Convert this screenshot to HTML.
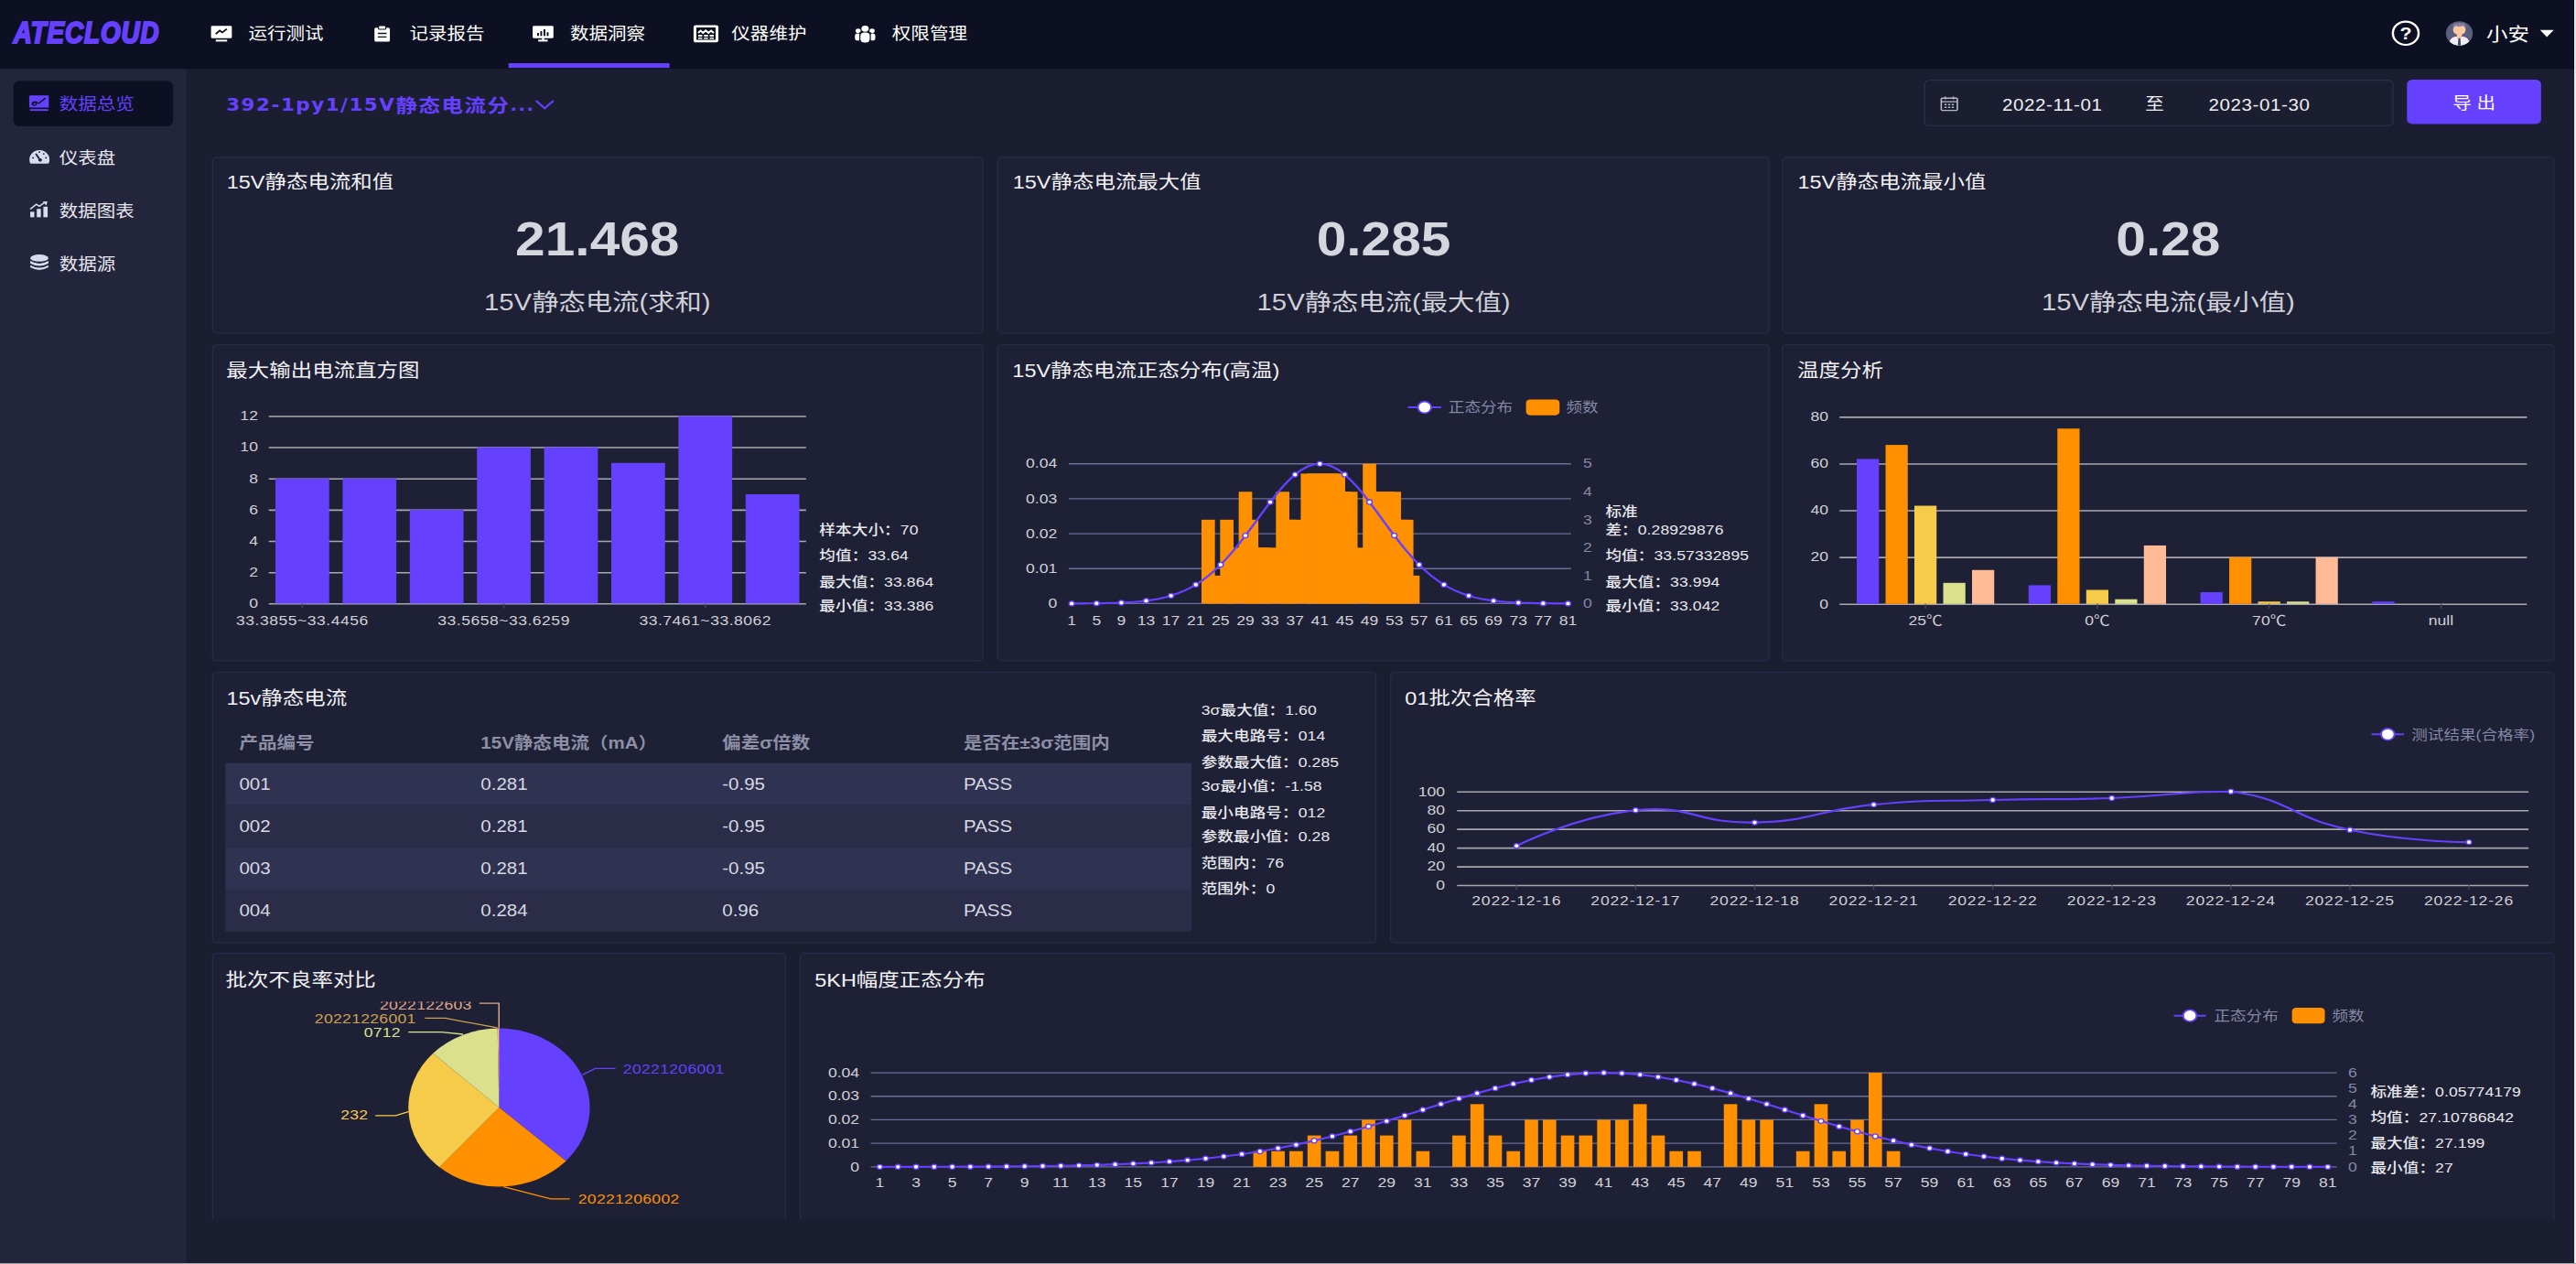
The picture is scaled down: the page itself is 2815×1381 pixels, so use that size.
<!DOCTYPE html>
<html lang="zh-CN"><head><meta charset="utf-8"><title>ATECLOUD</title>
<style>
html,body{margin:0;padding:0;}
body{width:2815px;height:1381px;overflow:hidden;background:#1b1e31;font-family:"Liberation Sans","Noto Sans CJK SC",sans-serif;}
#app{position:absolute;left:0;top:0;width:1920px;height:1080px;transform-origin:0 0;transform:scale(1.466146,1.278704);background:#1b1e31;color:#fff;font-size:14px;overflow:hidden;}
.abs{position:absolute;}
#hdr{left:0;top:0;width:1920px;height:58.9px;background:#0d1022;}
#side{left:0;top:58.9px;width:138.9px;height:1022px;background:#23253d;}
.panel{position:absolute;background:#1e2035;border:1px solid #272a48;border-radius:3.5px;box-sizing:border-box;}
.ptitle{position:absolute;font-size:16px;line-height:20px;color:#f2f2f5;white-space:nowrap;}
.nav{position:absolute;top:0px;height:58px;line-height:58px;font-size:14px;color:#fff;white-space:nowrap;}
.sitem{position:absolute;left:44.2px;font-size:14px;line-height:20px;color:#e4e4ea;white-space:nowrap;}
.stat{position:absolute;font-size:12px;line-height:16px;color:#e8e8ee;white-space:nowrap;letter-spacing:0.06px;}
.stat b{font-weight:500;}
.big{position:absolute;text-align:center;font-weight:700;font-size:40px;line-height:46px;color:#d6d6de;}
.sub{position:absolute;text-align:center;font-size:20px;line-height:26px;color:#d0d0d8;white-space:nowrap;}
svg{position:absolute;left:0;top:0;overflow:visible;}
svg text{font-family:"Liberation Sans","Noto Sans CJK SC",sans-serif;}
.th{position:absolute;font-size:14px;font-weight:700;color:#8d8fa6;line-height:20px;white-space:nowrap;}
.td{position:absolute;font-size:14px;color:#d8d8e2;line-height:20px;white-space:nowrap;}
</style></head><body>
<div id="app">

<div id="hdr" class="abs">
<div class="abs" id="logo" style="left:10px;top:9.5px;height:36px;line-height:36px;font-size:26px;font-weight:700;font-style:italic;color:#6640ff;transform-origin:0 50%;transform:scaleX(0.728);-webkit-text-stroke:1.7px #6640ff;letter-spacing:0.9px;">ATECLOUD</div>
<svg width="1920" height="58.4">
<g transform="translate(157.3,21.1)"><rect x="0" y="1" width="15.5" height="10.5" rx="1" fill="#fff"/><rect x="3.5" y="12.8" width="8.5" height="1.6" fill="#fff"/><path d="M3.5 8 L6.5 5 L8.3 6.6 L11.8 3.6" stroke="#0d1022" stroke-width="1.3" fill="none"/></g>
<g transform="translate(278.1,21.1)"><rect x="1" y="2.5" width="11.5" height="12" rx="1.2" fill="#fff"/><rect x="4" y="0.8" width="5.5" height="3.2" rx="0.8" fill="#fff" stroke="#0d1022" stroke-width="0.8"/><path d="M3.5 7.5H10M3.5 10.5H10" stroke="#0d1022" stroke-width="1.1"/></g>
<g transform="translate(397,21.1)"><rect x="0" y="1" width="15.5" height="10.5" rx="1" fill="#fff"/><rect x="4.2" y="12.8" width="7" height="1.6" fill="#fff"/><rect x="7" y="11" width="1.6" height="2.5" fill="#fff"/><path d="M4 9.5V7M6.4 9.5V5.5M8.8 9.5V4M11.2 9.5V6.5" stroke="#0d1022" stroke-width="1.3"/></g>
<g transform="translate(517,21.1)"><rect x="1" y="1.4" width="16.4" height="12.6" rx="0.5" fill="none" stroke="#fff" stroke-width="2.1"/><path d="M3.4 7 L5.2 5.2 L7 7 L9 5 L11 7 L13 5.2 L15 7" stroke="#fff" stroke-width="1.5" fill="none"/><path d="M3.4 9.4H6.4M7.7 9.4H10.7M12 9.4H15" stroke="#fff" stroke-width="1.5"/><path d="M3.4 11.6H6.4M7.7 11.6H10.7M12 11.6H15" stroke="#fff" stroke-width="1.2"/></g>
<g transform="translate(637.2,21.1)" fill="#fff"><circle cx="7.6" cy="3.4" r="2.7"/><rect x="3.9" y="6.6" width="7.4" height="8.6" rx="3.2"/><circle cx="2.4" cy="5.2" r="1.9"/><rect x="0" y="7.4" width="4.2" height="6.2" rx="2"/><circle cx="12.8" cy="5.2" r="1.9"/><rect x="11" y="7.4" width="4.2" height="6.2" rx="2"/><rect x="3.3" y="6.4" width="0.8" height="8" fill="#0d1022"/><rect x="11.1" y="6.4" width="0.8" height="8" fill="#0d1022"/></g>
<ellipse cx="1793.1" cy="28.4" rx="9.6" ry="9.9" fill="none" stroke="#fff" stroke-width="1.7"/>
<text x="1793.1" y="33.6" font-size="14.6" font-weight="700" fill="#fff" text-anchor="middle">?</text>
<g><ellipse cx="1833.05" cy="28.5" rx="10" ry="10.4" fill="#5b5f7e"/><clipPath id="av"><ellipse cx="1833.05" cy="28.5" rx="10" ry="10.4"/></clipPath><g clip-path="url(#av)"><path d="M1825.2 40 Q1825 32.2 1830 31.2 L1836.1 31.2 Q1841.1 32.2 1840.9 40Z" fill="#efeff3"/><rect x="1831.2" y="27.5" width="3.7" height="5" fill="#fcc8a0"/><path d="M1831.2 31.2 L1833.05 34 L1834.9 31.2Z" fill="#fcc8a0"/><ellipse cx="1833.05" cy="25.3" rx="4.7" ry="4.6" fill="#fdc9a1"/><path d="M1828.4 24.2 Q1828 20.2 1830.6 19.6 L1831.4 20.4 L1833 19.2 L1834.6 20.4 L1835.6 19.6 Q1838.2 20.4 1837.7 24.2 Q1836.6 21.8 1835 22.2 Q1833 23 1831 22.2 Q1829.4 21.8 1828.4 24.2Z" fill="#80839b"/><path d="M1832.3 32.6 L1833.8 32.6 L1834.1 38.6 L1833.05 39.4 L1832 38.6Z" fill="#3c4060"/></g></g>
<path d="M1893.2 25.6 L1903.4 25.6 L1898.3 31.6Z" fill="#fff"/>
</svg>
<div class="nav" style="left:185.2px;">运行测试</div>
<div class="nav" style="left:305.2px;">记录报告</div>
<div class="nav" style="left:424.9px;">数据洞察</div>
<div class="nav" style="left:545.2px;">仪器维护</div>
<div class="nav" style="left:664.9px;">权限管理</div>
<div class="abs" style="left:379.2px;top:54.4px;width:120px;height:4px;background:#6640ff;"></div>
<div class="abs" style="left:1853.2px;top:18px;font-size:16px;line-height:24px;color:#fff;">小安</div>
</div>
<div id="side" class="abs"></div>
<div class="abs" style="left:9.5px;top:68.7px;width:119.7px;height:39.7px;background:#0d1022;border-radius:5px;"></div>
<svg width="140" height="300">
<g transform="translate(21.8,81.0) scale(0.94)"><rect x="0" y="0.5" width="15.5" height="11" rx="0.8" fill="#6640ff"/><rect x="0.6" y="13" width="14.5" height="1.6" fill="#6640ff"/><path d="M2.2 8.8 L5 6.2 L7.5 7.8 L13 2.8" stroke="#0d1022" stroke-width="1.1" fill="none"/><circle cx="4" cy="8" r="1.6" fill="none" stroke="#0d1022" stroke-width="0.9"/></g>
<g transform="translate(21.8,126.4) scale(0.94)"><path d="M0.3 12.5 A8 8.6 0 1 1 15.9 12.5 Q15.9 14.3 14.5 14.3 H1.7 Q0.3 14.3 0.3 12.5Z" fill="#d9dbee"/><path d="M8.6 11 L5.2 5.2" stroke="#23253d" stroke-width="1.5"/><circle cx="8.6" cy="11" r="1.5" fill="#23253d"/><g fill="#23253d"><circle cx="3" cy="9" r="0.7"/><circle cx="8" cy="3.8" r="0.7"/><circle cx="11.5" cy="5.4" r="0.7"/><circle cx="13.3" cy="9" r="0.7"/></g></g>
<g transform="translate(21.8,171.9) scale(0.94)" fill="#d9dbee"><rect x="0.8" y="9.6" width="3.2" height="5"/><rect x="6" y="7" width="3.2" height="7.6"/><rect x="11.2" y="5" width="3.4" height="9.6"/><path d="M0.8 7.2 L5.6 2.8 L8 4.6 L12.2 1.2" stroke="#d9dbee" stroke-width="1.3" fill="none"/><path d="M10.6 0.4 L14.4 0.2 L13.6 3.8Z"/></g>
<g transform="translate(21.8,217.1) scale(0.94)" fill="#d9dbee"><ellipse cx="8" cy="3.6" rx="7.2" ry="3.2"/><path d="M0.8 6.2 Q8 11 15.2 6.2 V8.4 Q8 13.2 0.8 8.4Z"/><path d="M0.8 10 Q8 14.8 15.2 10 V12 Q8 16.8 0.8 12Z"/></g>
</svg>
<div class="sitem" style="top:79.39999999999999px;color:#6640ff;">数据总览</div>
<div class="sitem" style="top:124.8px;color:#e6e6ee;">仪表盘</div>
<div class="sitem" style="top:170.3px;color:#e6e6ee;">数据图表</div>
<div class="sitem" style="top:215.5px;color:#e6e6ee;">数据源</div>
<div class="abs" id="crumb" style="left:168.6px;top:79px;font-size:16px;line-height:22px;font-weight:700;color:#6640ff;white-space:nowrap;letter-spacing:1.05px;"><span style="font-family:'DejaVu Sans','Liberation Sans',sans-serif;font-size:14.6px;">392-1py1/15V</span><span style="position:relative;top:0.8px;">静态电流分</span><span style="font-family:'DejaVu Sans',sans-serif;font-size:13.4px;">...</span></div>
<svg width="1920" height="120"><path d="M399.5 86 L406 92.6 L412.5 86" fill="none" stroke="#6640ff" stroke-width="1.6"/>
<g transform="translate(1446.3,82.3)" fill="none" stroke="#b7b8c6" stroke-width="1.1"><rect x="0.6" y="1.6" width="12" height="10.4" rx="0.8"/><path d="M0.6 4.6H12.6M3.6 0.2V2.6M9.6 0.2V2.6" /><path d="M3 7H10.4M3 9.4H10.4" stroke-dasharray="1.6 1.1"/></g>
</svg>
<div class="abs" style="left:1434px;top:68.4px;width:350px;height:40px;border:1px solid #2b2e4b;border-radius:4px;box-sizing:border-box;"></div>
<div class="abs" style="left:1492.4px;top:79.5px;font-size:14px;line-height:20px;color:#f0f0f4;letter-spacing:0.4px;">2022-11-01</div>
<div class="abs" style="left:1599px;top:79px;font-size:14px;line-height:20px;color:#f0f0f4;">至</div>
<div class="abs" style="left:1646.2px;top:79.5px;font-size:14px;line-height:20px;color:#f0f0f4;letter-spacing:0.4px;">2023-01-30</div>
<div class="abs" style="left:1794px;top:68.3px;width:100px;height:38.2px;background:#6640ff;border-radius:4px;text-align:center;line-height:40.2px;font-size:14px;color:#fff;">导 出</div>
<div class="panel" style="left:157.5px;top:133.8px;width:575.5px;height:151.4px;"></div>
<div class="ptitle" style="left:169.0px;top:146.3px;">15V静态电流和值</div>
<div class="big" style="left:157.5px;width:575.5px;top:181.2px;">21.468</div>
<div class="sub" style="left:157.5px;width:575.5px;top:245px;">15V静态电流(求和)</div>
<div class="panel" style="left:743.4px;top:133.8px;width:575.8000000000001px;height:151.4px;"></div>
<div class="ptitle" style="left:754.9px;top:146.3px;">15V静态电流最大值</div>
<div class="big" style="left:743.4px;width:575.8000000000001px;top:181.2px;">0.285</div>
<div class="sub" style="left:743.4px;width:575.8000000000001px;top:245px;">15V静态电流(最大值)</div>
<div class="panel" style="left:1328.4px;top:133.8px;width:575.3999999999999px;height:151.4px;"></div>
<div class="ptitle" style="left:1339.9px;top:146.3px;">15V静态电流最小值</div>
<div class="big" style="left:1328.4px;width:575.3999999999999px;top:181.2px;">0.28</div>
<div class="sub" style="left:1328.4px;width:575.3999999999999px;top:245px;">15V静态电流(最小值)</div>
<div class="panel" style="left:157.5px;top:294.2px;width:575.5px;height:271px;"></div>
<div class="ptitle" style="left:168.7px;top:306.5px;">最大输出电流直方图</div>
<div class="panel" style="left:743.4px;top:294.2px;width:575.8000000000001px;height:271px;"></div>
<div class="ptitle" style="left:754.6px;top:306.5px;">15V静态电流正态分布(高温)</div>
<div class="panel" style="left:1328.4px;top:294.2px;width:575.3999999999999px;height:271px;"></div>
<div class="ptitle" style="left:1339.6000000000001px;top:306.5px;">温度分析</div>
<svg width="1920" height="1080">
<path d="M200.30 516.00H600.80" stroke="#a8a8ae" stroke-width="1.2"/>
<text x="192.30" y="519.40" font-size="12" fill="#d0d0d6" text-anchor="end" >0</text>
<path d="M200.30 489.30H600.80" stroke="#a8a8ae" stroke-width="1.2"/>
<text x="192.30" y="492.70" font-size="12" fill="#d0d0d6" text-anchor="end" >2</text>
<path d="M200.30 462.60H600.80" stroke="#a8a8ae" stroke-width="1.2"/>
<text x="192.30" y="466.00" font-size="12" fill="#d0d0d6" text-anchor="end" >4</text>
<path d="M200.30 435.90H600.80" stroke="#a8a8ae" stroke-width="1.2"/>
<text x="192.30" y="439.30" font-size="12" fill="#d0d0d6" text-anchor="end" >6</text>
<path d="M200.30 409.20H600.80" stroke="#a8a8ae" stroke-width="1.2"/>
<text x="192.30" y="412.60" font-size="12" fill="#d0d0d6" text-anchor="end" >8</text>
<path d="M200.30 382.50H600.80" stroke="#a8a8ae" stroke-width="1.2"/>
<text x="192.30" y="385.90" font-size="12" fill="#d0d0d6" text-anchor="end" >10</text>
<path d="M200.30 355.80H600.80" stroke="#a8a8ae" stroke-width="1.2"/>
<text x="192.30" y="359.20" font-size="12" fill="#d0d0d6" text-anchor="end" >12</text>
<rect x="205.31" y="408.90" width="40.05" height="106.80" fill="#6640ff"/>
<rect x="255.37" y="408.90" width="40.05" height="106.80" fill="#6640ff"/>
<rect x="305.43" y="435.60" width="40.05" height="80.10" fill="#6640ff"/>
<rect x="355.49" y="382.20" width="40.05" height="133.50" fill="#6640ff"/>
<rect x="405.56" y="382.20" width="40.05" height="133.50" fill="#6640ff"/>
<rect x="455.62" y="395.55" width="40.05" height="120.15" fill="#6640ff"/>
<rect x="505.68" y="355.50" width="40.05" height="160.20" fill="#6640ff"/>
<rect x="555.74" y="422.25" width="40.05" height="93.45" fill="#6640ff"/>
<path d="M225.33 515.7v4" stroke="#44465a" stroke-width="1"/>
<text x="225.33" y="533.90" font-size="12" fill="#d0d0d6" text-anchor="middle" letter-spacing="0.33">33.3855~33.4456</text>
<path d="M375.52 515.7v4" stroke="#44465a" stroke-width="1"/>
<text x="375.52" y="533.90" font-size="12" fill="#d0d0d6" text-anchor="middle" letter-spacing="0.33">33.5658~33.6259</text>
<path d="M525.71 515.7v4" stroke="#44465a" stroke-width="1"/>
<text x="525.71" y="533.90" font-size="12" fill="#d0d0d6" text-anchor="middle" letter-spacing="0.33">33.7461~33.8062</text>
<path d="M796.50 515.70H1171.00" stroke="#6b6f97" stroke-width="1"/>
<text x="788.00" y="519.40" font-size="12" fill="#d0d0d6" text-anchor="end" >0</text>
<path d="M796.50 485.85H1171.00" stroke="#6b6f97" stroke-width="1"/>
<text x="788.00" y="489.55" font-size="12" fill="#d0d0d6" text-anchor="end" >0.01</text>
<path d="M796.50 456.00H1171.00" stroke="#6b6f97" stroke-width="1"/>
<text x="788.00" y="459.70" font-size="12" fill="#d0d0d6" text-anchor="end" >0.02</text>
<path d="M796.50 426.15H1171.00" stroke="#6b6f97" stroke-width="1"/>
<text x="788.00" y="429.85" font-size="12" fill="#d0d0d6" text-anchor="end" >0.03</text>
<path d="M796.50 396.30H1171.00" stroke="#6b6f97" stroke-width="1"/>
<text x="788.00" y="400.00" font-size="12" fill="#d0d0d6" text-anchor="end" >0.04</text>
<text x="1180.00" y="519.40" font-size="12" fill="#8588a6" text-anchor="start" >0</text>
<text x="1180.00" y="495.52" font-size="12" fill="#8588a6" text-anchor="start" >1</text>
<text x="1180.00" y="471.64" font-size="12" fill="#8588a6" text-anchor="start" >2</text>
<text x="1180.00" y="447.76" font-size="12" fill="#8588a6" text-anchor="start" >3</text>
<text x="1180.00" y="423.88" font-size="12" fill="#8588a6" text-anchor="start" >4</text>
<text x="1180.00" y="400.00" font-size="12" fill="#8588a6" text-anchor="start" >5</text>
<rect x="895.53" y="444.06" width="10" height="71.64" fill="#ff9000"/>
<rect x="900.15" y="491.82" width="10" height="23.88" fill="#ff9000"/>
<rect x="909.40" y="444.06" width="10" height="71.64" fill="#ff9000"/>
<rect x="914.02" y="467.94" width="10" height="47.76" fill="#ff9000"/>
<rect x="923.27" y="420.18" width="10" height="95.52" fill="#ff9000"/>
<rect x="927.89" y="444.06" width="10" height="71.64" fill="#ff9000"/>
<rect x="932.52" y="467.94" width="10" height="47.76" fill="#ff9000"/>
<rect x="937.14" y="467.94" width="10" height="47.76" fill="#ff9000"/>
<rect x="941.76" y="467.94" width="10" height="47.76" fill="#ff9000"/>
<rect x="951.01" y="420.18" width="10" height="95.52" fill="#ff9000"/>
<rect x="955.63" y="444.06" width="10" height="71.64" fill="#ff9000"/>
<rect x="960.26" y="444.06" width="10" height="71.64" fill="#ff9000"/>
<rect x="969.50" y="404.66" width="10" height="111.04" fill="#ff9000"/>
<rect x="974.13" y="404.66" width="10" height="111.04" fill="#ff9000"/>
<rect x="978.75" y="404.66" width="10" height="111.04" fill="#ff9000"/>
<rect x="983.37" y="404.66" width="10" height="111.04" fill="#ff9000"/>
<rect x="988.00" y="404.66" width="10" height="111.04" fill="#ff9000"/>
<rect x="992.62" y="404.66" width="10" height="111.04" fill="#ff9000"/>
<rect x="997.24" y="420.18" width="10" height="95.52" fill="#ff9000"/>
<rect x="1001.87" y="420.18" width="10" height="95.52" fill="#ff9000"/>
<rect x="1006.49" y="467.94" width="10" height="47.76" fill="#ff9000"/>
<rect x="1015.74" y="396.30" width="10" height="119.40" fill="#ff9000"/>
<rect x="1020.36" y="420.18" width="10" height="95.52" fill="#ff9000"/>
<rect x="1024.98" y="420.18" width="10" height="95.52" fill="#ff9000"/>
<rect x="1029.61" y="420.18" width="10" height="95.52" fill="#ff9000"/>
<rect x="1034.23" y="420.18" width="10" height="95.52" fill="#ff9000"/>
<rect x="1038.85" y="444.06" width="10" height="71.64" fill="#ff9000"/>
<rect x="1043.48" y="444.06" width="10" height="71.64" fill="#ff9000"/>
<rect x="1048.10" y="491.82" width="10" height="23.88" fill="#ff9000"/>
<path d="M798.81 515.66 L803.44 515.64 L808.06 515.61 L812.68 515.57 L817.31 515.52 L821.93 515.44 L826.55 515.33 L831.18 515.18 L835.80 514.99 L840.42 514.72 L845.05 514.37 L849.67 513.92 L854.29 513.33 L858.92 512.58 L863.54 511.63 L868.16 510.45 L872.79 509.00 L877.41 507.22 L882.03 505.08 L886.66 502.54 L891.28 499.54 L895.90 496.06 L900.53 492.07 L905.15 487.55 L909.77 482.50 L914.40 476.94 L919.02 470.89 L923.65 464.41 L928.27 457.58 L932.89 450.50 L937.52 443.28 L942.14 436.06 L946.76 429.00 L951.39 422.25 L956.01 415.97 L960.63 410.33 L965.26 405.48 L969.88 401.55 L974.50 398.66 L979.13 396.90 L983.75 396.30 L988.37 396.90 L993.00 398.66 L997.62 401.55 L1002.24 405.48 L1006.87 410.33 L1011.49 415.97 L1016.11 422.25 L1020.74 429.00 L1025.36 436.06 L1029.98 443.28 L1034.61 450.50 L1039.23 457.58 L1043.85 464.41 L1048.48 470.89 L1053.10 476.94 L1057.73 482.50 L1062.35 487.55 L1066.97 492.07 L1071.60 496.06 L1076.22 499.54 L1080.84 502.54 L1085.47 505.08 L1090.09 507.22 L1094.71 509.00 L1099.34 510.45 L1103.96 511.63 L1108.58 512.58 L1113.21 513.33 L1117.83 513.92 L1122.45 514.37 L1127.08 514.72 L1131.70 514.99 L1136.32 515.18 L1140.95 515.33 L1145.57 515.44 L1150.19 515.52 L1154.82 515.57 L1159.44 515.61 L1164.06 515.64 L1168.69 515.66" fill="none" stroke="#6640ff" stroke-width="1.7"/>
<circle cx="798.81" cy="515.66" r="2" fill="#fff" stroke="#6640ff" stroke-width="1"/>
<text x="798.81" y="533.90" font-size="12" fill="#d0d0d6" text-anchor="middle" >1</text>
<circle cx="817.31" cy="515.52" r="2" fill="#fff" stroke="#6640ff" stroke-width="1"/>
<text x="817.31" y="533.90" font-size="12" fill="#d0d0d6" text-anchor="middle" >5</text>
<circle cx="835.80" cy="514.99" r="2" fill="#fff" stroke="#6640ff" stroke-width="1"/>
<text x="835.80" y="533.90" font-size="12" fill="#d0d0d6" text-anchor="middle" >9</text>
<circle cx="854.29" cy="513.33" r="2" fill="#fff" stroke="#6640ff" stroke-width="1"/>
<text x="854.29" y="533.90" font-size="12" fill="#d0d0d6" text-anchor="middle" >13</text>
<circle cx="872.79" cy="509.00" r="2" fill="#fff" stroke="#6640ff" stroke-width="1"/>
<text x="872.79" y="533.90" font-size="12" fill="#d0d0d6" text-anchor="middle" >17</text>
<circle cx="891.28" cy="499.54" r="2" fill="#fff" stroke="#6640ff" stroke-width="1"/>
<text x="891.28" y="533.90" font-size="12" fill="#d0d0d6" text-anchor="middle" >21</text>
<circle cx="909.77" cy="482.50" r="2" fill="#fff" stroke="#6640ff" stroke-width="1"/>
<text x="909.77" y="533.90" font-size="12" fill="#d0d0d6" text-anchor="middle" >25</text>
<circle cx="928.27" cy="457.58" r="2" fill="#fff" stroke="#6640ff" stroke-width="1"/>
<text x="928.27" y="533.90" font-size="12" fill="#d0d0d6" text-anchor="middle" >29</text>
<circle cx="946.76" cy="429.00" r="2" fill="#fff" stroke="#6640ff" stroke-width="1"/>
<text x="946.76" y="533.90" font-size="12" fill="#d0d0d6" text-anchor="middle" >33</text>
<circle cx="965.26" cy="405.48" r="2" fill="#fff" stroke="#6640ff" stroke-width="1"/>
<text x="965.26" y="533.90" font-size="12" fill="#d0d0d6" text-anchor="middle" >37</text>
<circle cx="983.75" cy="396.30" r="2" fill="#fff" stroke="#6640ff" stroke-width="1"/>
<text x="983.75" y="533.90" font-size="12" fill="#d0d0d6" text-anchor="middle" >41</text>
<circle cx="1002.24" cy="405.48" r="2" fill="#fff" stroke="#6640ff" stroke-width="1"/>
<text x="1002.24" y="533.90" font-size="12" fill="#d0d0d6" text-anchor="middle" >45</text>
<circle cx="1020.74" cy="429.00" r="2" fill="#fff" stroke="#6640ff" stroke-width="1"/>
<text x="1020.74" y="533.90" font-size="12" fill="#d0d0d6" text-anchor="middle" >49</text>
<circle cx="1039.23" cy="457.58" r="2" fill="#fff" stroke="#6640ff" stroke-width="1"/>
<text x="1039.23" y="533.90" font-size="12" fill="#d0d0d6" text-anchor="middle" >53</text>
<circle cx="1057.73" cy="482.50" r="2" fill="#fff" stroke="#6640ff" stroke-width="1"/>
<text x="1057.73" y="533.90" font-size="12" fill="#d0d0d6" text-anchor="middle" >57</text>
<circle cx="1076.22" cy="499.54" r="2" fill="#fff" stroke="#6640ff" stroke-width="1"/>
<text x="1076.22" y="533.90" font-size="12" fill="#d0d0d6" text-anchor="middle" >61</text>
<circle cx="1094.71" cy="509.00" r="2" fill="#fff" stroke="#6640ff" stroke-width="1"/>
<text x="1094.71" y="533.90" font-size="12" fill="#d0d0d6" text-anchor="middle" >65</text>
<circle cx="1113.21" cy="513.33" r="2" fill="#fff" stroke="#6640ff" stroke-width="1"/>
<text x="1113.21" y="533.90" font-size="12" fill="#d0d0d6" text-anchor="middle" >69</text>
<circle cx="1131.70" cy="514.99" r="2" fill="#fff" stroke="#6640ff" stroke-width="1"/>
<text x="1131.70" y="533.90" font-size="12" fill="#d0d0d6" text-anchor="middle" >73</text>
<circle cx="1150.19" cy="515.52" r="2" fill="#fff" stroke="#6640ff" stroke-width="1"/>
<text x="1150.19" y="533.90" font-size="12" fill="#d0d0d6" text-anchor="middle" >77</text>
<circle cx="1168.69" cy="515.66" r="2" fill="#fff" stroke="#6640ff" stroke-width="1"/>
<text x="1168.69" y="533.90" font-size="12" fill="#d0d0d6" text-anchor="middle" >81</text>
<path d="M1049.4 348H1074.2" stroke="#6640ff" stroke-width="1.6"/><circle cx="1061.8" cy="348" r="5" fill="#fff" stroke="#6640ff" stroke-width="1.3"/>
<text x="1079.60" y="352.30" font-size="12" fill="#8588a6" text-anchor="start" >正态分布</text>
<rect x="1137.4" y="341.3" width="25" height="13.5" rx="3" fill="#ff9000"/>
<text x="1167.30" y="352.30" font-size="12" fill="#8588a6" text-anchor="start" >频数</text>
<path d="M1371.10 516.30H1883.40" stroke="#a8a8ae" stroke-width="1.2"/>
<text x="1362.80" y="519.70" font-size="12" fill="#d0d0d6" text-anchor="end" >0</text>
<path d="M1371.10 476.35H1883.40" stroke="#a8a8ae" stroke-width="1.2"/>
<text x="1362.80" y="479.75" font-size="12" fill="#d0d0d6" text-anchor="end" >20</text>
<path d="M1371.10 436.40H1883.40" stroke="#a8a8ae" stroke-width="1.2"/>
<text x="1362.80" y="439.80" font-size="12" fill="#d0d0d6" text-anchor="end" >40</text>
<path d="M1371.10 396.45H1883.40" stroke="#a8a8ae" stroke-width="1.2"/>
<text x="1362.80" y="399.85" font-size="12" fill="#d0d0d6" text-anchor="end" >60</text>
<path d="M1371.10 356.50H1883.40" stroke="#a8a8ae" stroke-width="1.2"/>
<text x="1362.80" y="359.90" font-size="12" fill="#d0d0d6" text-anchor="end" >80</text>
<rect x="1383.91" y="392.15" width="16.53" height="123.84" fill="#6640ff"/>
<rect x="1405.39" y="380.17" width="16.53" height="135.83" fill="#ff9000"/>
<rect x="1426.87" y="432.11" width="16.53" height="83.90" fill="#f7cb4a"/>
<rect x="1448.36" y="498.02" width="16.53" height="17.98" fill="#dbe08d"/>
<rect x="1469.84" y="487.04" width="16.53" height="28.96" fill="#ffbb96"/>
<path d="M1435.14 516.0v4" stroke="#44465a" stroke-width="1"/>
<text x="1435.14" y="534.20" font-size="12" fill="#d0d0d6" text-anchor="middle" >25℃</text>
<rect x="1511.98" y="500.02" width="16.53" height="15.98" fill="#6640ff"/>
<rect x="1533.47" y="366.19" width="16.53" height="149.81" fill="#ff9000"/>
<rect x="1554.95" y="504.01" width="16.53" height="11.99" fill="#f7cb4a"/>
<rect x="1576.43" y="512.00" width="16.53" height="4.00" fill="#dbe08d"/>
<rect x="1597.92" y="466.06" width="16.53" height="49.94" fill="#ffbb96"/>
<path d="M1563.21 516.0v4" stroke="#44465a" stroke-width="1"/>
<text x="1563.21" y="534.20" font-size="12" fill="#d0d0d6" text-anchor="middle" >0℃</text>
<rect x="1640.06" y="506.01" width="16.53" height="9.99" fill="#6640ff"/>
<rect x="1661.54" y="476.05" width="16.53" height="39.95" fill="#ff9000"/>
<rect x="1683.02" y="514.00" width="16.53" height="2.00" fill="#f7cb4a"/>
<rect x="1704.51" y="514.00" width="16.53" height="2.00" fill="#dbe08d"/>
<rect x="1725.99" y="476.05" width="16.53" height="39.95" fill="#ffbb96"/>
<path d="M1691.29 516.0v4" stroke="#44465a" stroke-width="1"/>
<text x="1691.29" y="534.20" font-size="12" fill="#d0d0d6" text-anchor="middle" >70℃</text>
<rect x="1768.13" y="514.00" width="16.53" height="2.00" fill="#6640ff"/>
<path d="M1819.36 516.0v4" stroke="#44465a" stroke-width="1"/>
<text x="1819.36" y="534.20" font-size="12" fill="#d0d0d6" text-anchor="middle" >null</text>
</svg>
<div class="stat" style="left:610.7px;top:445.3px;"><b>样本大小：</b>70</div>
<div class="stat" style="left:610.7px;top:467.3px;"><b>均值：</b>33.64</div>
<div class="stat" style="left:610.7px;top:488.59999999999997px;"><b>最大值：</b>33.864</div>
<div class="stat" style="left:610.7px;top:510.3px;"><b>最小值：</b>33.386</div>
<div class="stat" style="left:1196.6px;top:429.0px;"><b>标准</b></div>
<div class="stat" style="left:1196.6px;top:445.3px;"><b>差：</b>0.28929876</div>
<div class="stat" style="left:1196.6px;top:467.3px;"><b>均值：</b>33.57332895</div>
<div class="stat" style="left:1196.6px;top:488.59999999999997px;"><b>最大值：</b>33.994</div>
<div class="stat" style="left:1196.6px;top:510.3px;"><b>最小值：</b>33.042</div>
<div class="panel" style="left:157.5px;top:574.3px;width:868.7px;height:231.4px;"></div>
<div class="ptitle" style="left:168.8px;top:586.7px;">15v静态电流</div>
<div class="panel" style="left:1036.2px;top:574.3px;width:867.5999999999999px;height:231.4px;"></div>
<div class="ptitle" style="left:1047.2px;top:586.7px;">01批次合格率</div>
<div class="th" style="left:178.3px;top:625.2px;">产品编号</div>
<div class="th" style="left:358.3px;top:625.2px;">15V静态电流（mA）</div>
<div class="th" style="left:538.3px;top:625.2px;">偏差σ倍数</div>
<div class="th" style="left:718.2px;top:625.2px;">是否在±3σ范围内</div>
<div class="abs" style="left:168.3px;top:651.80px;width:719.5px;height:36.1px;background:#303252;"></div>
<div class="td" style="left:178.3px;top:660.10px;">001</div>
<div class="td" style="left:358.3px;top:660.10px;">0.281</div>
<div class="td" style="left:538.3px;top:660.10px;">-0.95</div>
<div class="td" style="left:718.2px;top:660.10px;">PASS</div>
<div class="abs" style="left:168.3px;top:687.83px;width:719.5px;height:36.1px;background:#2a2c48;"></div>
<div class="td" style="left:178.3px;top:696.13px;">002</div>
<div class="td" style="left:358.3px;top:696.13px;">0.281</div>
<div class="td" style="left:538.3px;top:696.13px;">-0.95</div>
<div class="td" style="left:718.2px;top:696.13px;">PASS</div>
<div class="abs" style="left:168.3px;top:723.86px;width:719.5px;height:36.1px;background:#303252;"></div>
<div class="td" style="left:178.3px;top:732.16px;">003</div>
<div class="td" style="left:358.3px;top:732.16px;">0.281</div>
<div class="td" style="left:538.3px;top:732.16px;">-0.95</div>
<div class="td" style="left:718.2px;top:732.16px;">PASS</div>
<div class="abs" style="left:168.3px;top:759.89px;width:719.5px;height:36.1px;background:#2a2c48;"></div>
<div class="td" style="left:178.3px;top:768.19px;">004</div>
<div class="td" style="left:358.3px;top:768.19px;">0.284</div>
<div class="td" style="left:538.3px;top:768.19px;">0.96</div>
<div class="td" style="left:718.2px;top:768.19px;">PASS</div>
<div class="stat" style="left:895.3px;top:599.30px;"><b>3σ最大值：</b>1.60</div>
<div class="stat" style="left:895.3px;top:620.90px;"><b>最大电路号：</b>014</div>
<div class="stat" style="left:895.3px;top:642.50px;"><b>参数最大值：</b>0.285</div>
<div class="stat" style="left:895.3px;top:664.10px;"><b>3σ最小值：</b>-1.58</div>
<div class="stat" style="left:895.3px;top:685.70px;"><b>最小电路号：</b>012</div>
<div class="stat" style="left:895.3px;top:707.30px;"><b>参数最小值：</b>0.28</div>
<div class="stat" style="left:895.3px;top:728.90px;"><b>范围内：</b>76</div>
<div class="stat" style="left:895.3px;top:750.50px;"><b>范围外：</b>0</div>
<svg width="1920" height="1080">
<path d="M1086.00 756.70H1884.60" stroke="#a8a8ae" stroke-width="1.2"/>
<text x="1077.00" y="760.10" font-size="12" fill="#d0d0d6" text-anchor="end" >0</text>
<path d="M1086.00 740.68H1884.60" stroke="#a8a8ae" stroke-width="1.2"/>
<text x="1077.00" y="744.08" font-size="12" fill="#d0d0d6" text-anchor="end" >20</text>
<path d="M1086.00 724.66H1884.60" stroke="#a8a8ae" stroke-width="1.2"/>
<text x="1077.00" y="728.06" font-size="12" fill="#d0d0d6" text-anchor="end" >40</text>
<path d="M1086.00 708.64H1884.60" stroke="#a8a8ae" stroke-width="1.2"/>
<text x="1077.00" y="712.04" font-size="12" fill="#d0d0d6" text-anchor="end" >60</text>
<path d="M1086.00 692.62H1884.60" stroke="#a8a8ae" stroke-width="1.2"/>
<text x="1077.00" y="696.02" font-size="12" fill="#d0d0d6" text-anchor="end" >80</text>
<path d="M1086.00 676.60H1884.60" stroke="#a8a8ae" stroke-width="1.2"/>
<text x="1077.00" y="680.00" font-size="12" fill="#d0d0d6" text-anchor="end" >100</text>
<path d="M1130.37 722.76 C1130.37 722.76 1173.65 697.45 1219.10 692.32 C1262.38 687.44 1263.64 703.93 1307.83 702.73 C1352.37 701.53 1351.90 692.35 1396.57 687.51 C1440.63 682.74 1440.91 684.91 1485.30 683.51 C1529.65 682.11 1529.71 683.71 1574.03 681.91 C1618.44 680.10 1619.78 676.30 1662.77 676.30 C1708.51 683.32 1705.86 698.02 1751.50 709.14 C1794.59 719.64 1840.23 719.55 1840.23 719.55" fill="none" stroke="#6640ff" stroke-width="1.7"/>
<circle cx="1130.37" cy="722.76" r="2" fill="#fff" stroke="#6640ff" stroke-width="1"/>
<path d="M1130.37 756.4v4" stroke="#44465a" stroke-width="1"/>
<text x="1130.37" y="773.80" font-size="12" fill="#d0d0d6" text-anchor="middle" letter-spacing="0.55">2022-12-16</text>
<circle cx="1219.10" cy="692.32" r="2" fill="#fff" stroke="#6640ff" stroke-width="1"/>
<path d="M1219.10 756.4v4" stroke="#44465a" stroke-width="1"/>
<text x="1219.10" y="773.80" font-size="12" fill="#d0d0d6" text-anchor="middle" letter-spacing="0.55">2022-12-17</text>
<circle cx="1307.83" cy="702.73" r="2" fill="#fff" stroke="#6640ff" stroke-width="1"/>
<path d="M1307.83 756.4v4" stroke="#44465a" stroke-width="1"/>
<text x="1307.83" y="773.80" font-size="12" fill="#d0d0d6" text-anchor="middle" letter-spacing="0.55">2022-12-18</text>
<circle cx="1396.57" cy="687.51" r="2" fill="#fff" stroke="#6640ff" stroke-width="1"/>
<path d="M1396.57 756.4v4" stroke="#44465a" stroke-width="1"/>
<text x="1396.57" y="773.80" font-size="12" fill="#d0d0d6" text-anchor="middle" letter-spacing="0.55">2022-12-21</text>
<circle cx="1485.30" cy="683.51" r="2" fill="#fff" stroke="#6640ff" stroke-width="1"/>
<path d="M1485.30 756.4v4" stroke="#44465a" stroke-width="1"/>
<text x="1485.30" y="773.80" font-size="12" fill="#d0d0d6" text-anchor="middle" letter-spacing="0.55">2022-12-22</text>
<circle cx="1574.03" cy="681.91" r="2" fill="#fff" stroke="#6640ff" stroke-width="1"/>
<path d="M1574.03 756.4v4" stroke="#44465a" stroke-width="1"/>
<text x="1574.03" y="773.80" font-size="12" fill="#d0d0d6" text-anchor="middle" letter-spacing="0.55">2022-12-23</text>
<circle cx="1662.77" cy="676.30" r="2" fill="#fff" stroke="#6640ff" stroke-width="1"/>
<path d="M1662.77 756.4v4" stroke="#44465a" stroke-width="1"/>
<text x="1662.77" y="773.80" font-size="12" fill="#d0d0d6" text-anchor="middle" letter-spacing="0.55">2022-12-24</text>
<circle cx="1751.50" cy="709.14" r="2" fill="#fff" stroke="#6640ff" stroke-width="1"/>
<path d="M1751.50 756.4v4" stroke="#44465a" stroke-width="1"/>
<text x="1751.50" y="773.80" font-size="12" fill="#d0d0d6" text-anchor="middle" letter-spacing="0.55">2022-12-25</text>
<circle cx="1840.23" cy="719.55" r="2" fill="#fff" stroke="#6640ff" stroke-width="1"/>
<path d="M1840.23 756.4v4" stroke="#44465a" stroke-width="1"/>
<text x="1840.23" y="773.80" font-size="12" fill="#d0d0d6" text-anchor="middle" letter-spacing="0.55">2022-12-26</text>
<path d="M1767.6 627.4H1791.8" stroke="#6640ff" stroke-width="1.6"/><circle cx="1779.7" cy="627.4" r="5" fill="#fff" stroke="#6640ff" stroke-width="1.3"/>
<text x="1797.40" y="631.70" font-size="12" fill="#8588a6" text-anchor="start" >测试结果(合格率)</text>
</svg>
<div class="panel" style="left:157.5px;top:814.3px;width:428.79999999999995px;height:240px;"></div>
<div class="ptitle" style="left:168.2px;top:827.5px;">批次不良率对比</div>
<div class="panel" style="left:596px;top:814.3px;width:1307.8px;height:240px;"></div>
<div class="ptitle" style="left:607.2px;top:827.5px;">5KH幅度正态分布</div>
<svg width="1920" height="1080">
<path d="M372.0 946.3 L372.00 878.70 A67.6 67.6 0 0 1 421.84 991.97Z" fill="#6640ff"/>
<path d="M372.0 946.3 L421.84 991.97 A67.6 67.6 0 0 1 327.56 997.24Z" fill="#ff9000"/>
<path d="M372.0 946.3 L327.56 997.24 A67.6 67.6 0 0 1 322.80 899.94Z" fill="#f7cb4a"/>
<path d="M372.0 946.3 L322.80 899.94 A67.6 67.6 0 0 1 370.82 878.71Z" fill="#dbe08d"/>
<path d="M372.0 946.3 L370.82 878.71 L372.0 878.6999999999999Z" fill="#ffbb96"/>
<path d="M434.10 918.40 L443.60 913.00 L458.70 913.00" fill="none" stroke="#6640ff" stroke-width="1"/>
<text x="464.40" y="917.30" font-size="12" fill="#6640ff" text-anchor="start" letter-spacing="0.2">20221206001</text>
<path d="M375.40 1014.00 L410.50 1024.40 L424.70 1024.40" fill="none" stroke="#ff9000" stroke-width="1"/>
<text x="430.90" y="1028.20" font-size="12" fill="#ff9000" text-anchor="start" letter-spacing="0.2">20221206002</text>
<path d="M304.40 949.90 L294.90 953.20 L279.80 953.20" fill="none" stroke="#f7cb4a" stroke-width="1"/>
<text x="274.50" y="956.50" font-size="12" fill="#f7cb4a" text-anchor="end" letter-spacing="0.2">232</text>
<path d="M345.10 883.70 L329.00 881.90 L304.40 881.90" fill="none" stroke="#dbe08d" stroke-width="1"/>
<text x="298.70" y="886.20" font-size="12" fill="#dbe08d" text-anchor="end" letter-spacing="0.2">0712</text>
<path d="M370.70 878.20 L331.90 870.00 L316.70 870.00" fill="none" stroke="#cfa052" stroke-width="1"/>
<text x="310.10" y="874.30" font-size="12" fill="#cfa052" text-anchor="end" letter-spacing="0.2">20221226001</text>
<clipPath id="pc"><rect x="200" y="856" width="300" height="100"/></clipPath>
<g clip-path="url(#pc)"><path d="M357.20 857.20 L371.90 857.20 L371.90 878.60" fill="none" stroke="#e2a78a" stroke-width="1"/><text x="351.70" y="862.60" font-size="12" fill="#e2a78a" text-anchor="end" letter-spacing="0.2">2022122603</text></g>
<path d="M649.05 997.00H1741.74" stroke="#6b6f97" stroke-width="1"/>
<text x="640.55" y="1000.70" font-size="12" fill="#d0d0d6" text-anchor="end" >0</text>
<path d="M649.05 976.90H1741.74" stroke="#6b6f97" stroke-width="1"/>
<text x="640.55" y="980.60" font-size="12" fill="#d0d0d6" text-anchor="end" >0.01</text>
<path d="M649.05 956.80H1741.74" stroke="#6b6f97" stroke-width="1"/>
<text x="640.55" y="960.50" font-size="12" fill="#d0d0d6" text-anchor="end" >0.02</text>
<path d="M649.05 936.70H1741.74" stroke="#6b6f97" stroke-width="1"/>
<text x="640.55" y="940.40" font-size="12" fill="#d0d0d6" text-anchor="end" >0.03</text>
<path d="M649.05 916.60H1741.74" stroke="#6b6f97" stroke-width="1"/>
<text x="640.55" y="920.30" font-size="12" fill="#d0d0d6" text-anchor="end" >0.04</text>
<text x="1750.24" y="1000.70" font-size="12" fill="#8588a6" text-anchor="start" >0</text>
<text x="1750.24" y="987.30" font-size="12" fill="#8588a6" text-anchor="start" >1</text>
<text x="1750.24" y="973.90" font-size="12" fill="#8588a6" text-anchor="start" >2</text>
<text x="1750.24" y="960.50" font-size="12" fill="#8588a6" text-anchor="start" >3</text>
<text x="1750.24" y="947.10" font-size="12" fill="#8588a6" text-anchor="start" >4</text>
<text x="1750.24" y="933.70" font-size="12" fill="#8588a6" text-anchor="start" >5</text>
<text x="1750.24" y="920.30" font-size="12" fill="#8588a6" text-anchor="start" >6</text>
<rect x="934.09" y="983.60" width="10" height="13.40" fill="#ff9000"/>
<rect x="947.57" y="983.60" width="10" height="13.40" fill="#ff9000"/>
<rect x="961.06" y="983.60" width="10" height="13.40" fill="#ff9000"/>
<rect x="974.55" y="970.20" width="10" height="26.80" fill="#ff9000"/>
<rect x="988.04" y="983.60" width="10" height="13.40" fill="#ff9000"/>
<rect x="1001.53" y="970.20" width="10" height="26.80" fill="#ff9000"/>
<rect x="1015.02" y="956.80" width="10" height="40.20" fill="#ff9000"/>
<rect x="1028.51" y="970.20" width="10" height="26.80" fill="#ff9000"/>
<rect x="1042.00" y="956.80" width="10" height="40.20" fill="#ff9000"/>
<rect x="1055.49" y="983.60" width="10" height="13.40" fill="#ff9000"/>
<rect x="1082.47" y="970.20" width="10" height="26.80" fill="#ff9000"/>
<rect x="1095.96" y="943.40" width="10" height="53.60" fill="#ff9000"/>
<rect x="1109.45" y="970.20" width="10" height="26.80" fill="#ff9000"/>
<rect x="1122.94" y="983.60" width="10" height="13.40" fill="#ff9000"/>
<rect x="1136.43" y="956.80" width="10" height="40.20" fill="#ff9000"/>
<rect x="1149.92" y="956.80" width="10" height="40.20" fill="#ff9000"/>
<rect x="1163.41" y="970.20" width="10" height="26.80" fill="#ff9000"/>
<rect x="1176.90" y="970.20" width="10" height="26.80" fill="#ff9000"/>
<rect x="1190.39" y="956.80" width="10" height="40.20" fill="#ff9000"/>
<rect x="1203.88" y="956.80" width="10" height="40.20" fill="#ff9000"/>
<rect x="1217.38" y="943.40" width="10" height="53.60" fill="#ff9000"/>
<rect x="1230.87" y="970.20" width="10" height="26.80" fill="#ff9000"/>
<rect x="1244.36" y="983.60" width="10" height="13.40" fill="#ff9000"/>
<rect x="1257.84" y="983.60" width="10" height="13.40" fill="#ff9000"/>
<rect x="1284.82" y="943.40" width="10" height="53.60" fill="#ff9000"/>
<rect x="1298.32" y="956.80" width="10" height="40.20" fill="#ff9000"/>
<rect x="1311.80" y="956.80" width="10" height="40.20" fill="#ff9000"/>
<rect x="1338.78" y="983.60" width="10" height="13.40" fill="#ff9000"/>
<rect x="1352.28" y="943.40" width="10" height="53.60" fill="#ff9000"/>
<rect x="1365.76" y="983.60" width="10" height="13.40" fill="#ff9000"/>
<rect x="1379.26" y="956.80" width="10" height="40.20" fill="#ff9000"/>
<rect x="1392.74" y="916.60" width="10" height="80.40" fill="#ff9000"/>
<rect x="1406.24" y="983.60" width="10" height="13.40" fill="#ff9000"/>
<path d="M655.79 996.97 L669.28 996.96 L682.77 996.94 L696.26 996.91 L709.75 996.88 L723.25 996.82 L736.73 996.75 L750.22 996.65 L763.71 996.52 L777.20 996.34 L790.69 996.11 L804.18 995.80 L817.67 995.40 L831.16 994.90 L844.65 994.26 L858.14 993.47 L871.63 992.49 L885.12 991.29 L898.62 989.85 L912.11 988.14 L925.60 986.12 L939.09 983.78 L952.57 981.09 L966.06 978.05 L979.55 974.65 L993.04 970.90 L1006.53 966.82 L1020.02 962.46 L1033.51 957.87 L1047.00 953.10 L1060.49 948.23 L1073.98 943.38 L1087.47 938.62 L1100.96 934.07 L1114.45 929.84 L1127.94 926.05 L1141.43 922.78 L1154.92 920.14 L1168.41 918.19 L1181.90 917.00 L1195.39 916.60 L1208.88 917.00 L1222.38 918.19 L1235.87 920.14 L1249.36 922.78 L1262.84 926.05 L1276.34 929.84 L1289.82 934.07 L1303.32 938.62 L1316.80 943.38 L1330.30 948.23 L1343.78 953.10 L1357.28 957.87 L1370.76 962.46 L1384.26 966.82 L1397.74 970.90 L1411.24 974.65 L1424.72 978.05 L1438.21 981.09 L1451.70 983.78 L1465.19 986.12 L1478.68 988.14 L1492.17 989.85 L1505.66 991.29 L1519.15 992.49 L1532.64 993.47 L1546.13 994.26 L1559.62 994.90 L1573.12 995.40 L1586.61 995.80 L1600.09 996.11 L1613.59 996.34 L1627.07 996.52 L1640.57 996.65 L1654.05 996.75 L1667.55 996.82 L1681.04 996.88 L1694.52 996.91 L1708.01 996.94 L1721.50 996.96 L1734.99 996.97" fill="none" stroke="#6640ff" stroke-width="1.7"/>
<circle cx="655.79" cy="996.97" r="2" fill="#fff" stroke="#6640ff" stroke-width="1"/>
<text x="655.79" y="1014.20" font-size="12" fill="#d0d0d6" text-anchor="middle" >1</text>
<circle cx="669.28" cy="996.96" r="2" fill="#fff" stroke="#6640ff" stroke-width="1"/>
<circle cx="682.77" cy="996.94" r="2" fill="#fff" stroke="#6640ff" stroke-width="1"/>
<text x="682.77" y="1014.20" font-size="12" fill="#d0d0d6" text-anchor="middle" >3</text>
<circle cx="696.26" cy="996.91" r="2" fill="#fff" stroke="#6640ff" stroke-width="1"/>
<circle cx="709.75" cy="996.88" r="2" fill="#fff" stroke="#6640ff" stroke-width="1"/>
<text x="709.75" y="1014.20" font-size="12" fill="#d0d0d6" text-anchor="middle" >5</text>
<circle cx="723.25" cy="996.82" r="2" fill="#fff" stroke="#6640ff" stroke-width="1"/>
<circle cx="736.73" cy="996.75" r="2" fill="#fff" stroke="#6640ff" stroke-width="1"/>
<text x="736.73" y="1014.20" font-size="12" fill="#d0d0d6" text-anchor="middle" >7</text>
<circle cx="750.22" cy="996.65" r="2" fill="#fff" stroke="#6640ff" stroke-width="1"/>
<circle cx="763.71" cy="996.52" r="2" fill="#fff" stroke="#6640ff" stroke-width="1"/>
<text x="763.71" y="1014.20" font-size="12" fill="#d0d0d6" text-anchor="middle" >9</text>
<circle cx="777.20" cy="996.34" r="2" fill="#fff" stroke="#6640ff" stroke-width="1"/>
<circle cx="790.69" cy="996.11" r="2" fill="#fff" stroke="#6640ff" stroke-width="1"/>
<text x="790.69" y="1014.20" font-size="12" fill="#d0d0d6" text-anchor="middle" >11</text>
<circle cx="804.18" cy="995.80" r="2" fill="#fff" stroke="#6640ff" stroke-width="1"/>
<circle cx="817.67" cy="995.40" r="2" fill="#fff" stroke="#6640ff" stroke-width="1"/>
<text x="817.67" y="1014.20" font-size="12" fill="#d0d0d6" text-anchor="middle" >13</text>
<circle cx="831.16" cy="994.90" r="2" fill="#fff" stroke="#6640ff" stroke-width="1"/>
<circle cx="844.65" cy="994.26" r="2" fill="#fff" stroke="#6640ff" stroke-width="1"/>
<text x="844.65" y="1014.20" font-size="12" fill="#d0d0d6" text-anchor="middle" >15</text>
<circle cx="858.14" cy="993.47" r="2" fill="#fff" stroke="#6640ff" stroke-width="1"/>
<circle cx="871.63" cy="992.49" r="2" fill="#fff" stroke="#6640ff" stroke-width="1"/>
<text x="871.63" y="1014.20" font-size="12" fill="#d0d0d6" text-anchor="middle" >17</text>
<circle cx="885.12" cy="991.29" r="2" fill="#fff" stroke="#6640ff" stroke-width="1"/>
<circle cx="898.62" cy="989.85" r="2" fill="#fff" stroke="#6640ff" stroke-width="1"/>
<text x="898.62" y="1014.20" font-size="12" fill="#d0d0d6" text-anchor="middle" >19</text>
<circle cx="912.11" cy="988.14" r="2" fill="#fff" stroke="#6640ff" stroke-width="1"/>
<circle cx="925.60" cy="986.12" r="2" fill="#fff" stroke="#6640ff" stroke-width="1"/>
<text x="925.60" y="1014.20" font-size="12" fill="#d0d0d6" text-anchor="middle" >21</text>
<circle cx="939.09" cy="983.78" r="2" fill="#fff" stroke="#6640ff" stroke-width="1"/>
<circle cx="952.57" cy="981.09" r="2" fill="#fff" stroke="#6640ff" stroke-width="1"/>
<text x="952.57" y="1014.20" font-size="12" fill="#d0d0d6" text-anchor="middle" >23</text>
<circle cx="966.06" cy="978.05" r="2" fill="#fff" stroke="#6640ff" stroke-width="1"/>
<circle cx="979.55" cy="974.65" r="2" fill="#fff" stroke="#6640ff" stroke-width="1"/>
<text x="979.55" y="1014.20" font-size="12" fill="#d0d0d6" text-anchor="middle" >25</text>
<circle cx="993.04" cy="970.90" r="2" fill="#fff" stroke="#6640ff" stroke-width="1"/>
<circle cx="1006.53" cy="966.82" r="2" fill="#fff" stroke="#6640ff" stroke-width="1"/>
<text x="1006.53" y="1014.20" font-size="12" fill="#d0d0d6" text-anchor="middle" >27</text>
<circle cx="1020.02" cy="962.46" r="2" fill="#fff" stroke="#6640ff" stroke-width="1"/>
<circle cx="1033.51" cy="957.87" r="2" fill="#fff" stroke="#6640ff" stroke-width="1"/>
<text x="1033.51" y="1014.20" font-size="12" fill="#d0d0d6" text-anchor="middle" >29</text>
<circle cx="1047.00" cy="953.10" r="2" fill="#fff" stroke="#6640ff" stroke-width="1"/>
<circle cx="1060.49" cy="948.23" r="2" fill="#fff" stroke="#6640ff" stroke-width="1"/>
<text x="1060.49" y="1014.20" font-size="12" fill="#d0d0d6" text-anchor="middle" >31</text>
<circle cx="1073.98" cy="943.38" r="2" fill="#fff" stroke="#6640ff" stroke-width="1"/>
<circle cx="1087.47" cy="938.62" r="2" fill="#fff" stroke="#6640ff" stroke-width="1"/>
<text x="1087.47" y="1014.20" font-size="12" fill="#d0d0d6" text-anchor="middle" >33</text>
<circle cx="1100.96" cy="934.07" r="2" fill="#fff" stroke="#6640ff" stroke-width="1"/>
<circle cx="1114.45" cy="929.84" r="2" fill="#fff" stroke="#6640ff" stroke-width="1"/>
<text x="1114.45" y="1014.20" font-size="12" fill="#d0d0d6" text-anchor="middle" >35</text>
<circle cx="1127.94" cy="926.05" r="2" fill="#fff" stroke="#6640ff" stroke-width="1"/>
<circle cx="1141.43" cy="922.78" r="2" fill="#fff" stroke="#6640ff" stroke-width="1"/>
<text x="1141.43" y="1014.20" font-size="12" fill="#d0d0d6" text-anchor="middle" >37</text>
<circle cx="1154.92" cy="920.14" r="2" fill="#fff" stroke="#6640ff" stroke-width="1"/>
<circle cx="1168.41" cy="918.19" r="2" fill="#fff" stroke="#6640ff" stroke-width="1"/>
<text x="1168.41" y="1014.20" font-size="12" fill="#d0d0d6" text-anchor="middle" >39</text>
<circle cx="1181.90" cy="917.00" r="2" fill="#fff" stroke="#6640ff" stroke-width="1"/>
<circle cx="1195.39" cy="916.60" r="2" fill="#fff" stroke="#6640ff" stroke-width="1"/>
<text x="1195.39" y="1014.20" font-size="12" fill="#d0d0d6" text-anchor="middle" >41</text>
<circle cx="1208.88" cy="917.00" r="2" fill="#fff" stroke="#6640ff" stroke-width="1"/>
<circle cx="1222.38" cy="918.19" r="2" fill="#fff" stroke="#6640ff" stroke-width="1"/>
<text x="1222.38" y="1014.20" font-size="12" fill="#d0d0d6" text-anchor="middle" >43</text>
<circle cx="1235.87" cy="920.14" r="2" fill="#fff" stroke="#6640ff" stroke-width="1"/>
<circle cx="1249.36" cy="922.78" r="2" fill="#fff" stroke="#6640ff" stroke-width="1"/>
<text x="1249.36" y="1014.20" font-size="12" fill="#d0d0d6" text-anchor="middle" >45</text>
<circle cx="1262.84" cy="926.05" r="2" fill="#fff" stroke="#6640ff" stroke-width="1"/>
<circle cx="1276.34" cy="929.84" r="2" fill="#fff" stroke="#6640ff" stroke-width="1"/>
<text x="1276.34" y="1014.20" font-size="12" fill="#d0d0d6" text-anchor="middle" >47</text>
<circle cx="1289.82" cy="934.07" r="2" fill="#fff" stroke="#6640ff" stroke-width="1"/>
<circle cx="1303.32" cy="938.62" r="2" fill="#fff" stroke="#6640ff" stroke-width="1"/>
<text x="1303.32" y="1014.20" font-size="12" fill="#d0d0d6" text-anchor="middle" >49</text>
<circle cx="1316.80" cy="943.38" r="2" fill="#fff" stroke="#6640ff" stroke-width="1"/>
<circle cx="1330.30" cy="948.23" r="2" fill="#fff" stroke="#6640ff" stroke-width="1"/>
<text x="1330.30" y="1014.20" font-size="12" fill="#d0d0d6" text-anchor="middle" >51</text>
<circle cx="1343.78" cy="953.10" r="2" fill="#fff" stroke="#6640ff" stroke-width="1"/>
<circle cx="1357.28" cy="957.87" r="2" fill="#fff" stroke="#6640ff" stroke-width="1"/>
<text x="1357.28" y="1014.20" font-size="12" fill="#d0d0d6" text-anchor="middle" >53</text>
<circle cx="1370.76" cy="962.46" r="2" fill="#fff" stroke="#6640ff" stroke-width="1"/>
<circle cx="1384.26" cy="966.82" r="2" fill="#fff" stroke="#6640ff" stroke-width="1"/>
<text x="1384.26" y="1014.20" font-size="12" fill="#d0d0d6" text-anchor="middle" >55</text>
<circle cx="1397.74" cy="970.90" r="2" fill="#fff" stroke="#6640ff" stroke-width="1"/>
<circle cx="1411.24" cy="974.65" r="2" fill="#fff" stroke="#6640ff" stroke-width="1"/>
<text x="1411.24" y="1014.20" font-size="12" fill="#d0d0d6" text-anchor="middle" >57</text>
<circle cx="1424.72" cy="978.05" r="2" fill="#fff" stroke="#6640ff" stroke-width="1"/>
<circle cx="1438.21" cy="981.09" r="2" fill="#fff" stroke="#6640ff" stroke-width="1"/>
<text x="1438.21" y="1014.20" font-size="12" fill="#d0d0d6" text-anchor="middle" >59</text>
<circle cx="1451.70" cy="983.78" r="2" fill="#fff" stroke="#6640ff" stroke-width="1"/>
<circle cx="1465.19" cy="986.12" r="2" fill="#fff" stroke="#6640ff" stroke-width="1"/>
<text x="1465.19" y="1014.20" font-size="12" fill="#d0d0d6" text-anchor="middle" >61</text>
<circle cx="1478.68" cy="988.14" r="2" fill="#fff" stroke="#6640ff" stroke-width="1"/>
<circle cx="1492.17" cy="989.85" r="2" fill="#fff" stroke="#6640ff" stroke-width="1"/>
<text x="1492.17" y="1014.20" font-size="12" fill="#d0d0d6" text-anchor="middle" >63</text>
<circle cx="1505.66" cy="991.29" r="2" fill="#fff" stroke="#6640ff" stroke-width="1"/>
<circle cx="1519.15" cy="992.49" r="2" fill="#fff" stroke="#6640ff" stroke-width="1"/>
<text x="1519.15" y="1014.20" font-size="12" fill="#d0d0d6" text-anchor="middle" >65</text>
<circle cx="1532.64" cy="993.47" r="2" fill="#fff" stroke="#6640ff" stroke-width="1"/>
<circle cx="1546.13" cy="994.26" r="2" fill="#fff" stroke="#6640ff" stroke-width="1"/>
<text x="1546.13" y="1014.20" font-size="12" fill="#d0d0d6" text-anchor="middle" >67</text>
<circle cx="1559.62" cy="994.90" r="2" fill="#fff" stroke="#6640ff" stroke-width="1"/>
<circle cx="1573.12" cy="995.40" r="2" fill="#fff" stroke="#6640ff" stroke-width="1"/>
<text x="1573.12" y="1014.20" font-size="12" fill="#d0d0d6" text-anchor="middle" >69</text>
<circle cx="1586.61" cy="995.80" r="2" fill="#fff" stroke="#6640ff" stroke-width="1"/>
<circle cx="1600.09" cy="996.11" r="2" fill="#fff" stroke="#6640ff" stroke-width="1"/>
<text x="1600.09" y="1014.20" font-size="12" fill="#d0d0d6" text-anchor="middle" >71</text>
<circle cx="1613.59" cy="996.34" r="2" fill="#fff" stroke="#6640ff" stroke-width="1"/>
<circle cx="1627.07" cy="996.52" r="2" fill="#fff" stroke="#6640ff" stroke-width="1"/>
<text x="1627.07" y="1014.20" font-size="12" fill="#d0d0d6" text-anchor="middle" >73</text>
<circle cx="1640.57" cy="996.65" r="2" fill="#fff" stroke="#6640ff" stroke-width="1"/>
<circle cx="1654.05" cy="996.75" r="2" fill="#fff" stroke="#6640ff" stroke-width="1"/>
<text x="1654.05" y="1014.20" font-size="12" fill="#d0d0d6" text-anchor="middle" >75</text>
<circle cx="1667.55" cy="996.82" r="2" fill="#fff" stroke="#6640ff" stroke-width="1"/>
<circle cx="1681.04" cy="996.88" r="2" fill="#fff" stroke="#6640ff" stroke-width="1"/>
<text x="1681.04" y="1014.20" font-size="12" fill="#d0d0d6" text-anchor="middle" >77</text>
<circle cx="1694.52" cy="996.91" r="2" fill="#fff" stroke="#6640ff" stroke-width="1"/>
<circle cx="1708.01" cy="996.94" r="2" fill="#fff" stroke="#6640ff" stroke-width="1"/>
<text x="1708.01" y="1014.20" font-size="12" fill="#d0d0d6" text-anchor="middle" >79</text>
<circle cx="1721.50" cy="996.96" r="2" fill="#fff" stroke="#6640ff" stroke-width="1"/>
<circle cx="1734.99" cy="996.97" r="2" fill="#fff" stroke="#6640ff" stroke-width="1"/>
<text x="1734.99" y="1014.20" font-size="12" fill="#d0d0d6" text-anchor="middle" >81</text>
<path d="M1620.3 867.8H1644.2" stroke="#6640ff" stroke-width="1.6"/><circle cx="1632.2" cy="867.8" r="5" fill="#fff" stroke="#6640ff" stroke-width="1.3"/>
<text x="1650.20" y="872.10" font-size="12" fill="#8588a6" text-anchor="start" >正态分布</text>
<rect x="1708.3" y="861.1" width="24.5" height="13.5" rx="3" fill="#ff9000"/>
<text x="1738.20" y="872.10" font-size="12" fill="#8588a6" text-anchor="start" >频数</text>
</svg>
<div class="stat" style="left:1766.8px;top:925.4000000000001px;"><b>标准差：</b>0.05774179</div>
<div class="stat" style="left:1766.8px;top:947.4000000000001px;"><b>均值：</b>27.10786842</div>
<div class="stat" style="left:1766.8px;top:968.7px;"><b>最大值：</b>27.199</div>
<div class="stat" style="left:1766.8px;top:990.1px;"><b>最小值：</b>27</div>
<div class="abs" style="left:138.9px;top:1042.4px;width:1782px;height:38px;background:#1b1e31;"></div>
</div><div style="position:absolute;left:2812.9px;top:0;width:2.1px;height:1381px;background:#e6e8ee;"></div><div style="position:absolute;left:0;top:1380px;width:2815px;height:1px;background:#a6a6aa;"></div></body></html>
